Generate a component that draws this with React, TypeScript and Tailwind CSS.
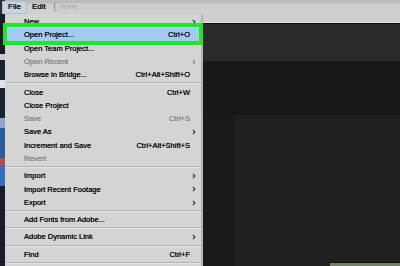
type Item =
  | { kind: "sep" }
  | { kind: "item"; label: string; shortcut?: string; sub?: boolean; disabled?: boolean; active?: boolean };

const items: Item[] = [
  { kind: "item", label: "New", sub: true },
  { kind: "item", label: "Open Project...", shortcut: "Ctrl+O", active: true },
  { kind: "item", label: "Open Team Project..." },
  { kind: "item", label: "Open Recent", sub: true, disabled: true },
  { kind: "item", label: "Browse in Bridge...", shortcut: "Ctrl+Alt+Shift+O" },
  { kind: "sep" },
  { kind: "item", label: "Close", shortcut: "Ctrl+W" },
  { kind: "item", label: "Close Project" },
  { kind: "item", label: "Save", shortcut: "Ctrl+S", disabled: true },
  { kind: "item", label: "Save As", sub: true },
  { kind: "item", label: "Increment and Save", shortcut: "Ctrl+Alt+Shift+S" },
  { kind: "item", label: "Revert", disabled: true },
  { kind: "sep" },
  { kind: "item", label: "Import", sub: true },
  { kind: "item", label: "Import Recent Footage", sub: true },
  { kind: "item", label: "Export", sub: true },
  { kind: "sep" },
  { kind: "item", label: "Add Fonts from Adobe..." },
  { kind: "sep" },
  { kind: "item", label: "Adobe Dynamic Link", sub: true },
  { kind: "sep" },
  { kind: "item", label: "Find", shortcut: "Ctrl+F" },
  { kind: "sep" },
];

function Chevron({ dim }: { dim?: boolean }) {
  return (
    <svg width="4" height="6" viewBox="0 0 4 6" className="block">
      <path d="M0.8 0.8 L3 3 L0.8 5.2" fill="none" stroke={dim ? "#8a8a8a" : "#333333"} strokeWidth="1.1" />
    </svg>
  );
}

function FileMenu() {
  return (
    <div className="absolute left-[5px] top-[14px] w-[198px] h-[260px] bg-[#d4d4d4] border-r-2 border-[#b4b4b4] pt-[1px]">
      {items.map((it, i) =>
        it.kind === "sep" ? (
          <div key={i} className="h-[4px] flex flex-col justify-center">
            <div className="h-px bg-[#b3b3b3]" />
            <div className="h-px bg-[#e4e4e4]" />
          </div>
        ) : (
          <div
            key={i}
            className={`h-[13.3px] flex items-center pl-[19px] ${it.active ? "bg-[#a3cbef]" : ""} ${
              it.disabled ? "text-[#878787]" : "text-[#0e0e0e]"
            } [text-shadow:0_0_0.3px_currentColor]`}
          >
            <span className="flex-1 whitespace-nowrap">{it.label}</span>
            {it.shortcut && <span className="whitespace-nowrap">{it.shortcut}</span>}
            <span className="w-[11px] flex justify-start pl-[2px]">{it.sub && <Chevron dim={it.disabled} />}</span>
          </div>
        )
      )}
    </div>
  );
}

export default function App() {
  return (
    <div
      className="relative w-[400px] h-[266px] overflow-hidden flex bg-[#1b1b1b] text-[7.5px]"
      style={{ fontFamily: '"Liberation Sans", Arial, sans-serif' }}
    >
      {/* desktop strip behind the window */}
      <div className="w-[5px] h-full flex flex-col bg-[#121824]">
        <div className="h-[14px] bg-[#2a2f3a]" />
        <div className="h-[40px] bg-[#161c28]" />
        <div className="h-[6px] bg-[#c8ccd4]" />
        <div className="h-[20px] bg-[#1a2230]" />
        <div className="h-[8px] bg-[#dfe3ea]" />
        <div className="h-[30px] bg-[#1b2333]" />
        <div className="h-[10px] bg-[#8ea6c4]" />
        <div className="h-[30px] bg-[#2b5d9c]" />
        <div className="h-[8px] bg-[#b14a58]" />
        <div className="h-[20px] bg-[#2f6fb8]" />
        <div className="flex-1 bg-[#151b27]" />
      </div>

      {/* app window */}
      <div className="flex-1 flex flex-col">
        <div className="h-[22px] bg-[linear-gradient(#bcbcbc_0,#bcbcbc_3px,#cfcfcf_4px,#cfcfcf_100%)]">
          <div className="h-[14px] flex items-center text-[8px] text-[#111] [text-shadow:0_0_0.3px_currentColor]">
            <div className="h-[13px] -ml-[3px] px-[5px] flex items-center bg-[#c8d4e0] border border-[#aebdcc]">File</div>
            <div className="px-[5px]">Edit</div>
            <div className="ml-[3px] h-[10px] pl-[4px] flex items-center rounded-l-[4px] border-l border-[#8a8a8a] text-[#a8a8a8] text-[7px] [text-shadow:none]">
              Home
            </div>
          </div>
        </div>
        <div className="h-px bg-[#e6e6e6]" />
        <div className="h-px bg-[#0c0c0c]" />
        <div className="h-[37px] bg-[#2a2a2a]" />
        <div className="h-[54px] bg-[#171717]" />
        <div className="flex-1 flex">
          <div className="w-[230px] bg-[#1a1a1a]" />
          <div className="flex-1 flex flex-col bg-[#202020]">
            <div className="flex-1" />
            <div className="h-[4px] flex">
              <div className="w-[95px]" />
              <div className="flex-1 flex flex-col">
                <div className="h-px bg-[#101010]" />
                <div className="flex-1 bg-[#74845a]" />
              </div>
            </div>
          </div>
        </div>
      </div>

      <FileMenu />

      {/* highlight callout */}
      <div className="absolute left-[3px] top-[23px] w-[200px] h-[22px] border-4 border-[#22e622]" />
    </div>
  );
}
